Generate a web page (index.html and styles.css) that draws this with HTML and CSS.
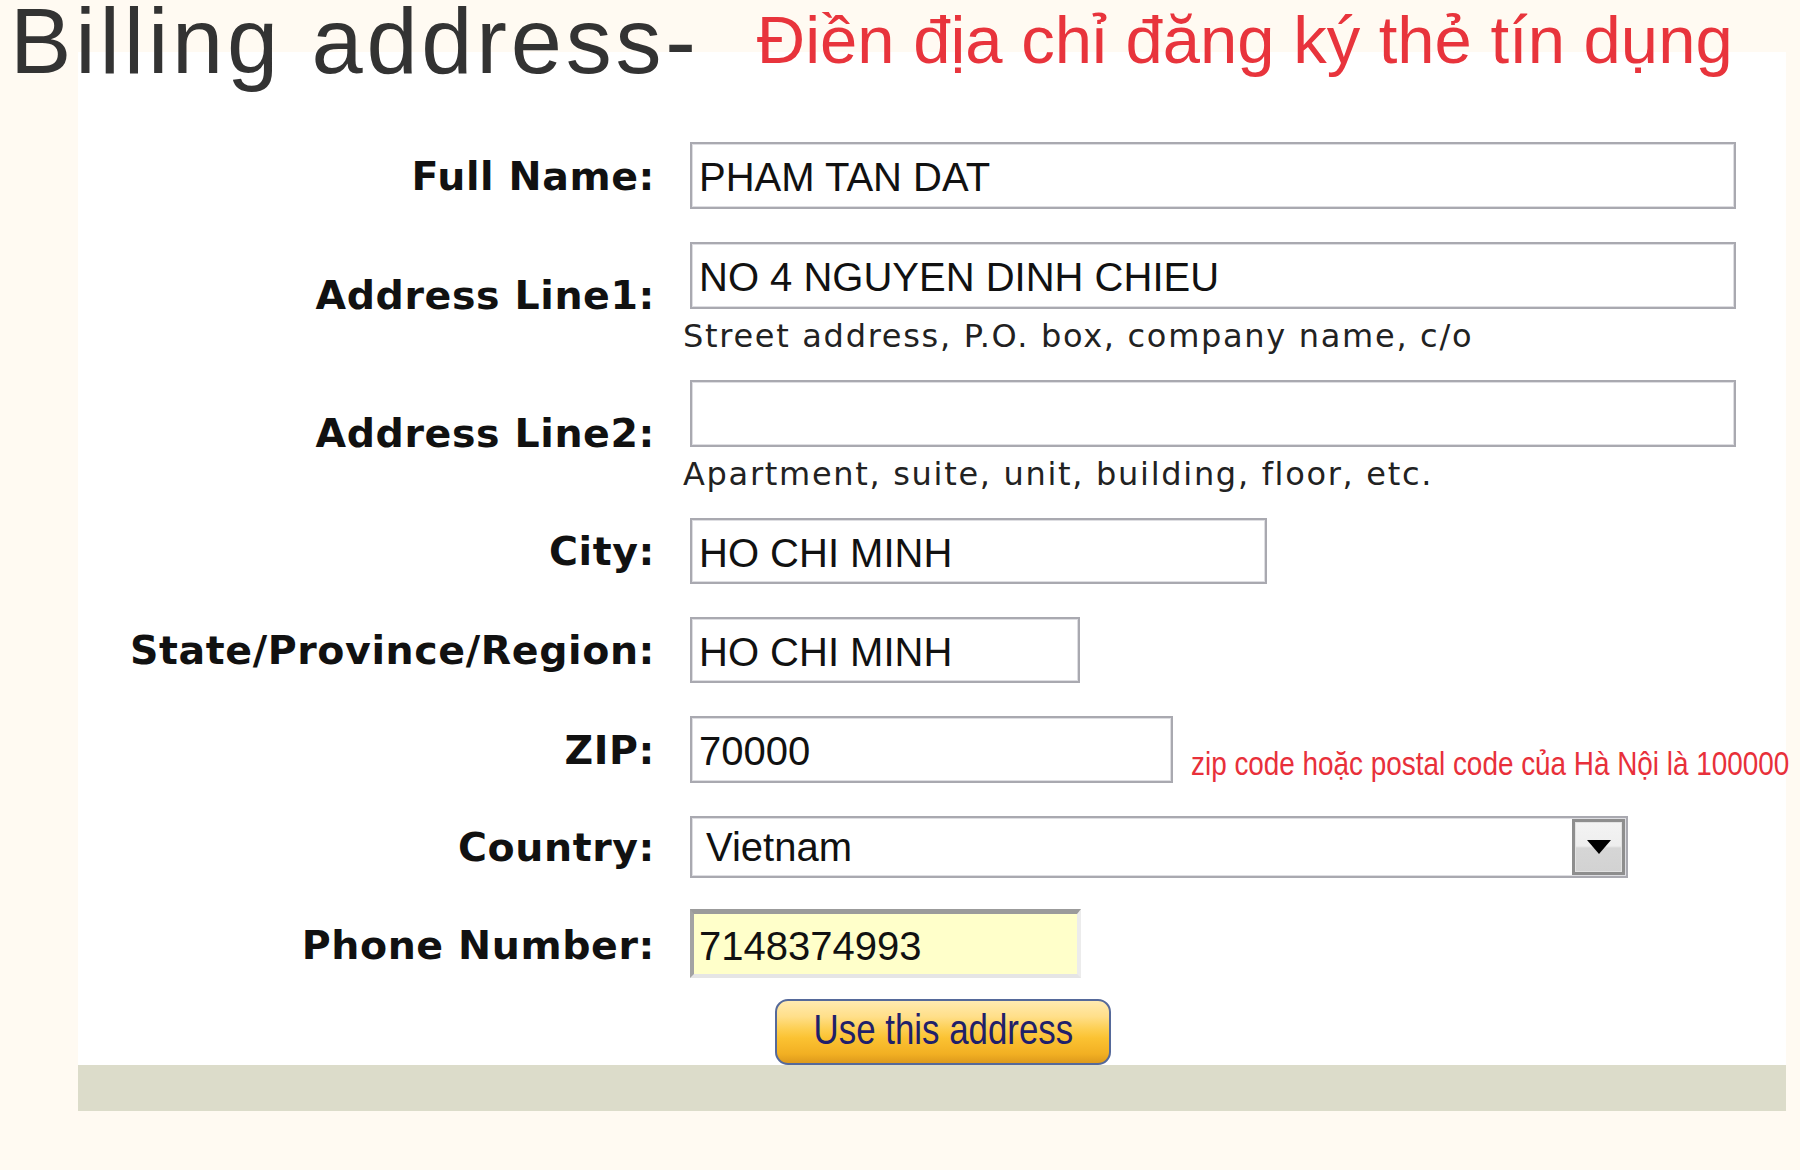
FILE: index.html
```html
<!DOCTYPE html>
<html lang="vi">
<head>
<meta charset="utf-8">
<title>Billing address</title>
<link rel="stylesheet" href="styles.css">
</head>
<body>
<div class="page">
  <header class="top">
    <h1 class="title"><span class="title-en">Billing address-</span><span class="title-vi">Điền địa chỉ đăng ký thẻ tín dụng</span></h1>
  </header>
  <main class="panel">
    <div class="form">
      <div class="label">Full Name:</div>
      <div class="cell"><div class="field w-full">PHAM TAN DAT</div></div>

      <div class="label">Address Line1:</div>
      <div class="cell">
        <div class="field w-full">NO 4 NGUYEN DINH CHIEU</div>
        <div class="hint">Street address, P.O. box, company name, c/o</div>
      </div>

      <div class="label">Address Line2:</div>
      <div class="cell">
        <div class="field w-full"></div>
        <div class="hint">Apartment, suite, unit, building, floor, etc.</div>
      </div>

      <div class="label">City:</div>
      <div class="cell"><div class="field w-city">HO CHI MINH</div></div>

      <div class="label">State/Province/Region:</div>
      <div class="cell"><div class="field w-state">HO CHI MINH</div></div>

      <div class="label">ZIP:</div>
      <div class="cell zip-cell">
        <div class="field w-zip">70000</div>
        <div class="note"><span class="narrow">zip code hoặc postal code của Hà Nội là 100000</span></div>
      </div>

      <div class="label">Country:</div>
      <div class="cell">
        <div class="select">
          <span class="select-value">Vietnam</span>
          <span class="select-arrow"><svg width="24" height="14" viewBox="0 0 24 14"><polygon points="0,0 24,0 12,14" fill="#000"/></svg></span>
        </div>
      </div>

      <div class="label">Phone Number:</div>
      <div class="cell"><div class="field phone">7148374993</div></div>

      <div class="cell btn-cell"><button type="button" class="btn"><span class="btn-text">Use this address</span></button></div>
    </div>
  </main>
  <div class="bar"></div>
</div>
</body>
</html>
```

FILE: styles.css
```css
html, body {
  margin: 0;
  padding: 0;
}
body {
  background: #fffaf2;
  width: 1800px;
  height: 1170px;
  overflow: hidden;
}
.page {
  width: 1800px;
}
.top {
  height: 52px;
}
.title {
  margin: 0;
  padding-left: 10px;
  font-family: "Liberation Sans", Arial, sans-serif;
  font-weight: normal;
  font-size: 92px;
  line-height: 82px;
  color: #333333;
  white-space: nowrap;
}
.title-en {
  letter-spacing: 3.8px;
}
.title-vi {
  font-size: 67px;
  line-height: 60px;
  color: #e8343c;
  margin-left: 57px;
  vertical-align: 10px;
}
.panel {
  display: block;
  background: #ffffff;
  margin-left: 78px;
  width: 1708px;
  height: 1013px;
  box-sizing: border-box;
  padding-top: 90px;
}
.form {
  display: grid;
  grid-template-columns: 577px 1fr;
  column-gap: 35px;
  row-gap: 33px;
  align-items: center;
}
.label {
  text-align: right;
  font-family: "DejaVu Sans", Verdana, sans-serif;
  font-weight: bold;
  font-size: 39.5px;
  letter-spacing: 0.6px;
  line-height: 46px;
  color: #111111;
  white-space: nowrap;
}
.cell {
  display: flex;
  flex-direction: column;
  align-items: flex-start;
}
.field {
  box-sizing: border-box;
  height: 67px;
  border: 2px solid #a9a9b0;
  box-shadow: inset 0 0 0 1px #dedee2;
  background: #ffffff;
  padding: 4px 0 0 7px;
  font-family: "Liberation Sans", Arial, sans-serif;
  font-size: 40px;
  line-height: 59px;
  color: #111111;
  white-space: nowrap;
}
.w-full { width: 1046px; }
.w-city { width: 577px; height: 66px; }
.w-state { width: 390px; height: 66px; }
.w-zip { width: 483px; }
.hint {
  margin: 16px 0 0 -7px;
  font-family: "DejaVu Sans", Verdana, sans-serif;
  font-size: 32px;
  letter-spacing: 1.7px;
  line-height: 22px;
  color: #222222;
  white-space: nowrap;
}
.zip-cell {
  flex-direction: row;
  align-items: flex-end;
  column-gap: 18px;
}
.note {
  font-family: "Liberation Sans", Arial, sans-serif;
  font-size: 34px;
  line-height: 40px;
  color: #e8303a;
  white-space: nowrap;
  width: 598px;
}
.narrow {
  display: inline-block;
  transform: scaleX(0.82);
  transform-origin: left center;
}
.select {
  box-sizing: border-box;
  width: 938px;
  height: 62px;
  border: 2px solid #a9a9b0;
  box-shadow: inset 0 0 0 1px #dedee2;
  background: #ffffff;
  display: flex;
  align-items: center;
  justify-content: space-between;
  padding-right: 1px;
}
.select-value {
  padding-left: 14px;
  font-family: "Liberation Sans", Arial, sans-serif;
  font-size: 40px;
  color: #111111;
}
.select-arrow {
  box-sizing: border-box;
  width: 53px;
  height: 56px;
  border: 3px solid #8e8e8e;
  box-shadow: inset 0 0 0 1px #e2e2e2;
  background: linear-gradient(#f3f3f3 0%, #eeeeee 48%, #d6d6d6 52%, #d2d2d2 100%);
  display: flex;
  align-items: center;
  justify-content: center;
}
.select-arrow svg {
  display: block;
}
.phone {
  width: 391px;
  height: 69px;
  margin-top: -2px;
  border-top: 5px solid #9b9b9b;
  border-left: 4px solid #a3a3a3;
  border-right: 4px solid #ececec;
  border-bottom: 4px solid #e5e5e5;
  box-shadow: none;
  background: #ffffca;
  padding: 4px 0 0 5px;
  line-height: 56px;
}
.btn-cell {
  grid-column: 2;
  margin-top: -12px;
}
.btn {
  margin: 0 0 0 85px;
  box-sizing: border-box;
  width: 336px;
  height: 66px;
  padding: 0 0 4px 0;
  border: 2px solid #55699a;
  border-radius: 13px;
  background: linear-gradient(#ffeab0 0%, #ffdf8a 25%, #fdcf52 45%, #fbc232 60%, #f2b023 85%, #dd9a1c 100%);
  font-family: "Liberation Sans", Arial, sans-serif;
  font-size: 42px;
  line-height: 58px;
  color: #1f206a;
  text-align: center;
  white-space: nowrap;
  overflow: hidden;
}
.btn-text {
  display: inline-block;
  transform: scaleX(0.83);
  transform-origin: center center;
}
.bar {
  margin-left: 78px;
  width: 1708px;
  height: 46px;
  background: #dcdcca;
}
```
